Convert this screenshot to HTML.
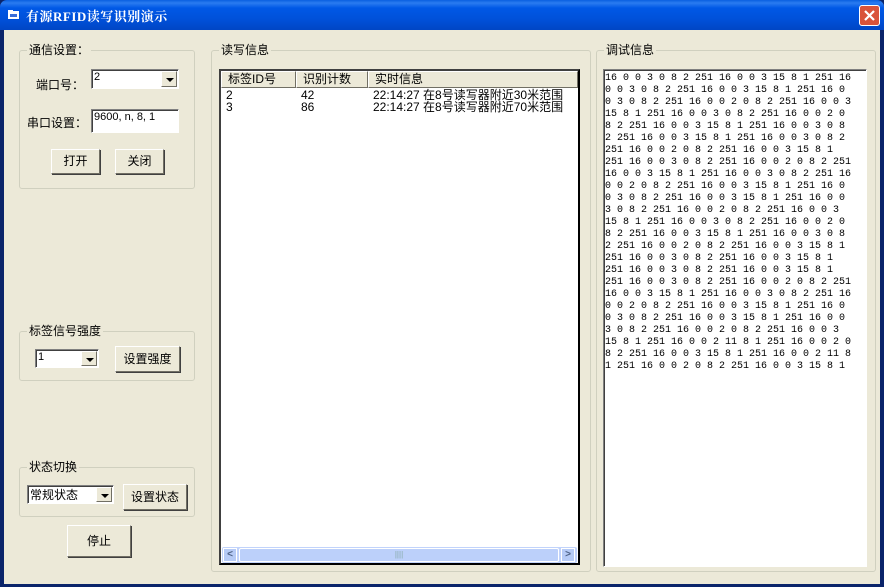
<!DOCTYPE html>
<html><head><meta charset="utf-8"><style>
*{margin:0;padding:0;box-sizing:border-box}
body{width:884px;height:587px;overflow:hidden;background:#0a246a;font-family:"Liberation Sans","Noto Sans CJK SC",sans-serif;font-size:12px;color:#000;position:relative}
.a{position:absolute}
#title{left:0;top:0;width:884px;height:30px;background:linear-gradient(#0a5fe0 0,#2b7cf0 3px,#0058e6 8px,#0050d8 20px,#0046c4 30px);border-radius:7px 7px 0 0}
#title span{position:absolute;left:26px;top:6px;color:#fff;font-weight:bold;font-size:13px;font-family:"Liberation Serif","Noto Serif CJK SC",serif;letter-spacing:0.5px}
#close{left:859px;top:5px;width:21px;height:21px;background:#d9533a;border:1px solid #fff;border-radius:3px}
#client{left:4px;top:30px;width:876px;height:554px;background:#ece9d8}
.grp{position:absolute;border:1px solid #d0d0bf;border-radius:3px}
.lg{position:absolute;top:-8px;left:7px;background:#ece9d8;padding:0 2px;font-size:12px;line-height:14px}
.btn{position:absolute;border:1px solid #fff;border-right-color:#716f64;border-bottom-color:#716f64;box-shadow:1px 1px 0 #404040;background:#ece9d8;text-align:center;font-size:12px}
.inp{position:absolute;background:#fff;border:1px solid #808080;border-right-color:#fff;border-bottom-color:#fff;box-shadow:inset 1px 1px 0 #404040;font-size:11px;padding:1px 2px}
.dd{position:absolute;right:1px;top:1px;bottom:1px;width:16px;background:#ece9d8;border:1px solid #fff;border-right-color:#716f64;border-bottom-color:#716f64}
.dd:after{content:"";position:absolute;left:4px;top:6px;border:4px solid transparent;border-top:4px solid #000;border-bottom:0}
pre{font-family:"Liberation Mono",monospace;font-size:10px;line-height:12px}
</style></head><body>
<div class="a" id="title"><svg class="a" style="left:7px;top:9px" width="14" height="12"><rect x="1" y="2" width="11" height="8" fill="#fff"/><rect x="1" y="1" width="5" height="2" fill="#fff"/><rect x="3" y="5" width="7" height="3" fill="#3a6ed8"/></svg><span>有源RFID读写识别演示</span></div>
<div class="a" id="close"><svg width="19" height="19"><path d="M5 5L14 14M14 5L5 14" stroke="#fff" stroke-width="2.2"/></svg></div>
<div class="a" id="client">
 <div class="grp" style="left:15px;top:20px;width:176px;height:139px"><div class="lg">通信设置：</div></div>
 <div class="a" style="left:32px;top:46px">端口号：</div>
 <div class="inp" style="left:87px;top:39px;width:88px;height:20px">2<div class="dd"></div></div>
 <div class="a" style="left:23px;top:84px">串口设置：</div>
 <div class="inp" style="left:87px;top:79px;width:88px;height:24px">9600, n, 8, 1</div>
 <div class="btn" style="left:47px;top:119px;width:49px;height:25px;line-height:23px">打开</div>
 <div class="btn" style="left:111px;top:119px;width:49px;height:25px;line-height:23px">关闭</div>

 <div class="grp" style="left:15px;top:301px;width:176px;height:50px"><div class="lg">标签信号强度</div></div>
 <div class="inp" style="left:31px;top:319px;width:64px;height:19px">1<div class="dd"></div></div>
 <div class="btn" style="left:111px;top:316px;width:65px;height:26px;line-height:24px">设置强度</div>

 <div class="grp" style="left:15px;top:437px;width:176px;height:50px"><div class="lg">状态切换</div></div>
 <div class="inp" style="left:23px;top:455px;width:87px;height:19px;font-size:12px;padding:0 2px">常规状态<div class="dd"></div></div>
 <div class="btn" style="left:119px;top:454px;width:64px;height:26px;line-height:24px">设置状态</div>
 <div class="btn" style="left:63px;top:495px;width:64px;height:32px;line-height:30px">停止</div>

 <div class="grp" style="left:207px;top:20px;width:380px;height:522px"><div class="lg">读写信息</div></div>
 <div class="a" style="left:215px;top:39px;width:361px;height:496px;background:#fff;border:2px solid #000;border-top-color:#404040;border-left-color:#404040">
  <div class="a" style="left:0;top:0;width:357px;height:17px;background:#ece9d8"></div>
  <div class="btn" style="left:0;top:0;width:75px;height:17px;line-height:15px;text-align:left;padding-left:6px;box-shadow:none">标签ID号</div>
  <div class="btn" style="left:75px;top:0;width:72px;height:17px;line-height:15px;text-align:left;padding-left:6px;box-shadow:none">识别计数</div>
  <div class="btn" style="left:147px;top:0;width:210px;height:17px;line-height:15px;text-align:left;padding-left:6px;box-shadow:none">实时信息</div>
  <div class="a" style="left:5px;top:18px;line-height:12px">2<br>3</div>
  <div class="a" style="left:80px;top:18px;line-height:12px">42<br>86</div>
  <div class="a" style="left:152px;top:18px;line-height:12px;white-space:nowrap">22:14:27 在8号读写器附近30米范围<br>22:14:27 在8号读写器附近70米范围</div>
  <div class="a" style="left:1px;top:476px;width:355px;height:16px;background:#c1d3fb;border-radius:2px"></div>
  <div class="a" style="left:2px;top:477px;width:14px;height:14px;background:#b6cbf6;border:1px solid #fff;color:#4d6185;font-size:10px;line-height:12px;text-align:center;font-weight:bold">&lt;</div>
  <div class="a" style="left:18px;top:477px;width:320px;height:14px;background:#bcd0fa;border:1px solid #fff;border-radius:2px;text-align:center;font-size:8px;color:#8aa;line-height:12px">||||</div>
  <div class="a" style="left:340px;top:477px;width:14px;height:14px;background:#b6cbf6;border:1px solid #fff;color:#4d6185;font-size:10px;line-height:12px;text-align:center;font-weight:bold">&gt;</div>
 </div>

 <div class="grp" style="left:592px;top:20px;width:280px;height:522px"><div class="lg">调试信息</div></div>
 <div class="inp" style="left:599px;top:39px;width:264px;height:498px;padding:3px 1px">
<pre>16 0 0 3 0 8 2 251 16 0 0 3 15 8 1 251 16
0 0 3 0 8 2 251 16 0 0 3 15 8 1 251 16 0
0 3 0 8 2 251 16 0 0 2 0 8 2 251 16 0 0 3
15 8 1 251 16 0 0 3 0 8 2 251 16 0 0 2 0
8 2 251 16 0 0 3 15 8 1 251 16 0 0 3 0 8
2 251 16 0 0 3 15 8 1 251 16 0 0 3 0 8 2
251 16 0 0 2 0 8 2 251 16 0 0 3 15 8 1
251 16 0 0 3 0 8 2 251 16 0 0 2 0 8 2 251
16 0 0 3 15 8 1 251 16 0 0 3 0 8 2 251 16
0 0 2 0 8 2 251 16 0 0 3 15 8 1 251 16 0
0 3 0 8 2 251 16 0 0 3 15 8 1 251 16 0 0
3 0 8 2 251 16 0 0 2 0 8 2 251 16 0 0 3
15 8 1 251 16 0 0 3 0 8 2 251 16 0 0 2 0
8 2 251 16 0 0 3 15 8 1 251 16 0 0 3 0 8
2 251 16 0 0 2 0 8 2 251 16 0 0 3 15 8 1
251 16 0 0 3 0 8 2 251 16 0 0 3 15 8 1
251 16 0 0 3 0 8 2 251 16 0 0 3 15 8 1
251 16 0 0 3 0 8 2 251 16 0 0 2 0 8 2 251
16 0 0 3 15 8 1 251 16 0 0 3 0 8 2 251 16
0 0 2 0 8 2 251 16 0 0 3 15 8 1 251 16 0
0 3 0 8 2 251 16 0 0 3 15 8 1 251 16 0 0
3 0 8 2 251 16 0 0 2 0 8 2 251 16 0 0 3
15 8 1 251 16 0 0 2 11 8 1 251 16 0 0 2 0
8 2 251 16 0 0 3 15 8 1 251 16 0 0 2 11 8
1 251 16 0 0 2 0 8 2 251 16 0 0 3 15 8 1</pre>
 </div>
</div>
</body></html>
